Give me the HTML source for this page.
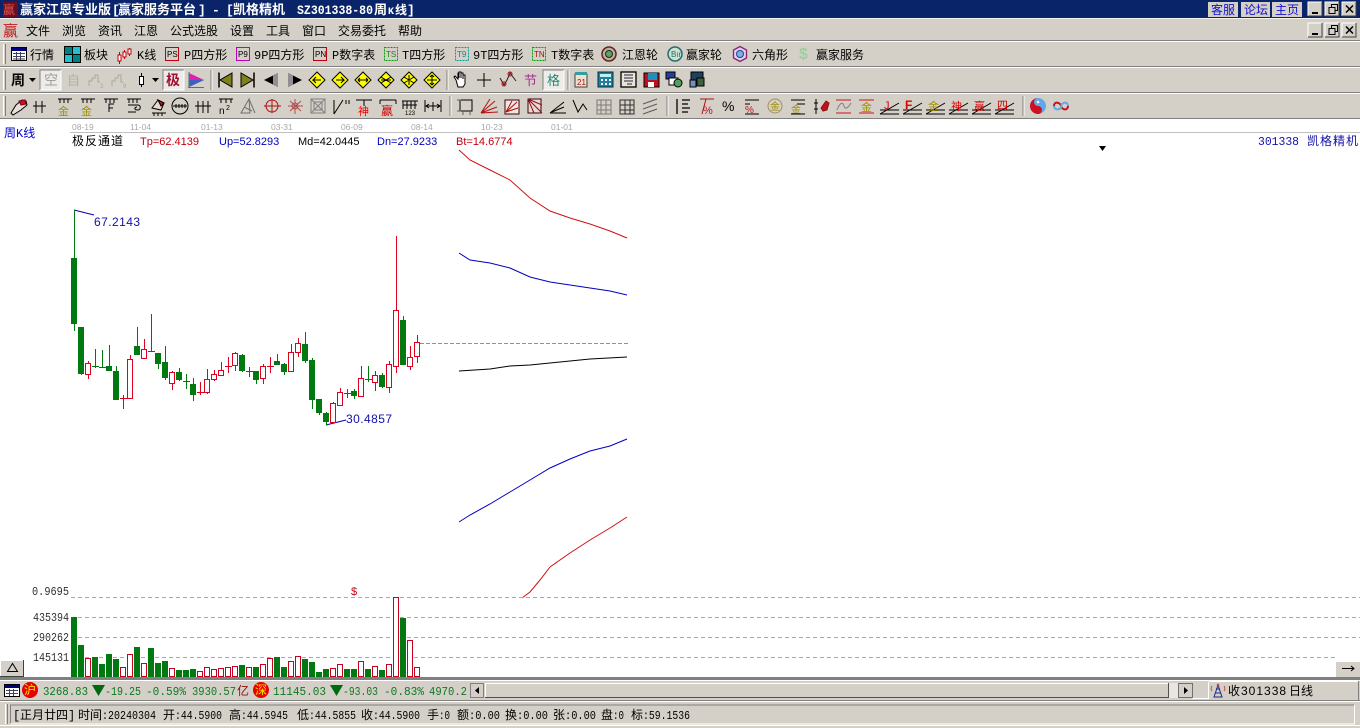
<!DOCTYPE html>
<html lang="zh"><head><meta charset="utf-8"><title>赢家江恩专业版</title>
<style>
html,body{margin:0;padding:0;background:#fff;width:1360px;height:728px;overflow:hidden}
svg{display:block;position:absolute;left:0;top:0}
text{font-family:"WenQuanYi Zen Hei","Liberation Mono","Noto Sans CJK SC",monospace;font-size:12px;fill:#000;white-space:pre}
.m{font-family:"Liberation Mono",monospace;font-size:11.5px}
.s{font-family:"Liberation Sans",sans-serif;font-size:11px}
.g{fill:#0a7a20}
.w{fill:#fff;font-weight:bold;font-size:13px}
.d{font-family:"Liberation Sans",sans-serif;font-size:8.5px;fill:#a8a8a8}
.b{fill:#0000c0}.r{fill:#c00010}
.i{font-family:"Liberation Sans",sans-serif;font-size:8px}
.l{stroke:#000;fill:none}
.n{font-family:"Liberation Sans",sans-serif;font-size:12px;letter-spacing:.45px;fill:#1010a8}
.k{fill:#303030}
</style></head><body>
<svg width="1360" height="728" viewBox="0 0 1360 728" xmlns="http://www.w3.org/2000/svg">
<defs>
<g id="dia"><path d="M0-8L8 0L0 8L-8 0Z" fill="#ffff00" stroke="#000"/></g>
<g id="btn"><rect width="14" height="14" fill="#d4d0c8"/><path d="M0 14V0H14" fill="none" stroke="#fff"/><path d="M14 0V14H0" fill="none" stroke="#404040"/></g>
<g id="ang"><path d="M-10 8H9M-10 4H9M-10 8L9-3" fill="none" stroke="#000"/></g>
</defs>

<!-- backgrounds -->
<rect width="1360" height="119" fill="#d4d0c8"/>
<rect width="1360" height="18" fill="#0a246a"/>
<rect y="18" width="1360" height="1" fill="#f4f4f0"/>
<g shape-rendering="crispEdges">
<rect y="40" width="1360" height="1" fill="#808080"/><rect y="41" width="1360" height="1" fill="#fff"/>
<rect y="66" width="1360" height="1" fill="#808080"/><rect y="67" width="1360" height="1" fill="#fff"/>
<rect y="92" width="1360" height="1" fill="#808080"/><rect y="93" width="1360" height="1" fill="#fff"/>
<rect y="118" width="1360" height="1" fill="#808080"/>
<path d="M3 44h1v20h-1zM3 70h1v20h-1zM3 96h1v20h-1z" fill="#fff"/>
<path d="M5 44h1v20h-1zM5 70h1v20h-1zM5 96h1v20h-1z" fill="#808080"/>
<path d="M211 70v20M447 70v20M568 70v20M450 96v20M667 96v20M1023 96v20" stroke="#808080"/>
<path d="M212 70v20M448 70v20M569 70v20M451 96v20M668 96v20M1024 96v20" stroke="#fff"/>
</g>

<!-- title -->
<rect x="3" y="2" width="15" height="15" fill="#6a1020"/>
<text x="3" y="14" style="fill:#e05050">赢</text>
<text x="20" y="14" class="w">赢家江恩专业版</text>
<text x="112" y="14" class="w">[</text><text x="118" y="14" class="w">赢家服务平台</text><text x="198" y="14" class="w">]</text><text x="212" y="14" class="w">-</text><text x="226" y="14" class="w">[</text><text x="233" y="14" class="w">凯格精机</text>
<text x="297" y="14" class="w m" textLength="76" lengthAdjust="spacingAndGlyphs">SZ301338-80</text><text x="374" y="14" class="w">周</text><text x="388" y="14" class="w" style="font-size:10px">K</text><text x="395" y="14" class="w" style="font-size:12px">线</text><text x="407" y="14" class="w">]</text>
<g shape-rendering="crispEdges">
<rect x="1208" y="2" width="30" height="15" fill="#d4d0c8"/><rect x="1241" y="2" width="29" height="15" fill="#d4d0c8"/><rect x="1272" y="2" width="30" height="15" fill="#d4d0c8"/>
</g>
<text x="1211" y="14" style="fill:#1010d0">客服</text><text x="1244" y="14" style="fill:#1010d0">论坛</text><text x="1275" y="14" style="fill:#1010d0">主页</text>
<g shape-rendering="crispEdges">
<use href="#btn" x="1308" y="2"/><use href="#btn" x="1325" y="2"/><use href="#btn" x="1342" y="2"/>
<use href="#btn" x="1308" y="23"/><use href="#btn" x="1325" y="23"/><use href="#btn" x="1342" y="23"/>
<path d="M1312 12h6v2h-6zM1312 33h6v2h-6z" fill="#000"/>
<path d="M1329 7.500h6v6h-6zM1331.500 7v-2.500h6v6h-2M1329 28.500h6v6h-6zM1331.500 28v-2.500h6v6h-2" fill="none" stroke="#000"/>
</g>
<path d="M1346 5.500l7 7M1353 5.500l-7 7M1346 26.500l7 7M1353 26.500l-7 7" stroke="#000" stroke-width="1.500"/>

<!-- menu -->
<text x="3" y="36" style="font-size:15px;fill:#c01818">赢</text>
<text x="26" y="35">文件</text><text x="62" y="35">浏览</text><text x="98" y="35">资讯</text><text x="134" y="35">江恩</text><text x="170" y="35">公式选股</text><text x="230" y="35">设置</text><text x="266" y="35">工具</text><text x="302" y="35">窗口</text><text x="338" y="35">交易委托</text><text x="398" y="35">帮助</text>

<!-- toolbar row 1 -->
<g shape-rendering="crispEdges">
<rect x="11.500" y="47.500" width="15" height="13" fill="#fff" stroke="#000"/><rect x="12" y="48" width="14" height="3" fill="#000080"/>
<path d="M13 53.500h12M13 56.500h12M13 59h12M16.500 52v8M20.500 52v8" stroke="#404060"/>
<path d="M65 47h7v7h-7z" fill="#008080"/><path d="M73 47h7v7h-7z" fill="#20c0d0"/><path d="M65 55h7v7h-7z" fill="#20c0d0"/><path d="M73 55h7v7h-7z" fill="#008080"/>
<path d="M64.500 46.500h16v16h-16z" fill="none" stroke="#000"/><path d="M72.500 46v17M64 54.500h17" stroke="#000"/>
</g>
<path d="M119.500 52v12M124.500 50v9M129.500 48v8" stroke="#c00010" fill="none"/>
<path d="M118 55h3v6h-3zM123 52h3v5h-3zM128 49h3v5h-3z" fill="#fff" stroke="#c00010"/>
<g shape-rendering="crispEdges" fill="none">
<rect x="165.500" y="47.500" width="13" height="13" stroke="#c00010"/>
<rect x="236.500" y="47.500" width="13" height="13" stroke="#c000c0"/>
<rect x="313.500" y="47.500" width="13" height="13" stroke="#c00010"/>
<rect x="384.500" y="47.500" width="13" height="13" stroke="#00a000" stroke-dasharray="2 1"/>
<rect x="455.500" y="47.500" width="13" height="13" stroke="#00a0a0" stroke-dasharray="2 1"/>
<rect x="532.500" y="47.500" width="13" height="13" stroke="#00a000" stroke-dasharray="2 1"/>
</g>
<text class="i" x="167" y="57">PS</text><text class="i" x="238" y="57">P9</text><text class="i" x="315" y="57">PN</text><text class="i" x="386" y="57" style="fill:#208020">TS</text><text class="i" x="457" y="57" style="fill:#208080">T9</text><text class="i" x="534" y="57" style="fill:#a01010">TN</text>
<circle cx="609" cy="54" r="7" fill="#b0b8a0" stroke="#6a2020" stroke-width="1.500"/><circle cx="609" cy="54" r="3.500" fill="#60a060" stroke="#302020"/>
<circle cx="675" cy="54" r="7" fill="#d0e0d0" stroke="#207070" stroke-width="1.500"/><text class="i" x="671" y="57" style="fill:#207070">Bın</text>
<path d="M740 46.500l6.500 3.500v8l-6.500 3.500l-6.500-3.500v-8z" fill="#e0d0e8" stroke="#8a2070" stroke-width="1.300"/><circle cx="740" cy="54" r="3.500" fill="#80b0e0" stroke="#2040a0"/>
<text x="799" y="59" style="font-family:'Liberation Sans';font-size:16px;font-weight:bold;fill:#9ccf9c">$</text>
<text x="30" y="59">行情</text><text x="84" y="59">板块</text><text x="137" y="59">K线</text><text x="184" y="59">P四方形</text><text x="254" y="59">9P四方形</text><text x="332" y="59">P数字表</text><text x="402" y="59">T四方形</text><text x="473" y="59">9T四方形</text><text x="551" y="59">T数字表</text><text x="622" y="59">江恩轮</text><text x="686" y="59">赢家轮</text><text x="752" y="59">六角形</text><text x="816" y="59">赢家服务</text>

<!-- toolbar row 2 -->
<text x="11" y="85" style="font-weight:bold;font-size:14px">周</text>
<path d="M29 78h7l-3.500 4z" fill="#000"/>
<rect x="40" y="70" width="21" height="20" fill="#eeece8"/><path d="M40 90V70H61" fill="none" stroke="#808080"/><path d="M61 70V90H40" fill="none" stroke="#fff"/>
<text x="44" y="85" style="font-size:14px;fill:#a0a0a0">空</text>
<text x="67" y="85" style="font-size:13px;fill:#b0b0a8">自</text>
<path d="M89 86v-5h3v-3h3v-3h3v7h2M112 86v-5h3v-3h3v-3h3v7h2" fill="none" stroke="#a8a8a0"/>
<text class="i" x="100" y="88" style="fill:#a8a8a0;font-size:6px">3</text><text class="i" x="123" y="88" style="fill:#a8a8a0;font-size:6px">9</text>
<path d="M141.500 73v14" stroke="#000"/><rect x="139.500" y="76.500" width="4" height="8" fill="#fff" stroke="#000"/>
<path d="M152 78h7l-3.500 4z" fill="#000"/>
<rect x="163" y="70" width="21" height="20" fill="#eeece8"/><path d="M163 90V70H184" fill="none" stroke="#808080"/><path d="M184 70V90H163" fill="none" stroke="#fff"/>
<text x="166" y="85" style="font-size:14px;fill:#a01030;font-weight:bold">极</text>
<path d="M189 73l15 7l-15 7z" fill="#e020b0"/><path d="M189 80l15 0l-15 7z" fill="#4060c0"/><path d="M189 72v16M188 87.500h16" stroke="#408060" fill="none"/>
<path d="M219 72.500v15" stroke="#000" stroke-width="1.500"/><path d="M232 73v14l-12-7z" fill="#80801c" stroke="#000"/>
<path d="M254 72.500v15" stroke="#000" stroke-width="1.500"/><path d="M241 73v14l12-7z" fill="#80801c" stroke="#000"/>
<path d="M264 80l14-7v14z" fill="#000"/><path d="M273 75.500l5-2.500v14l-5-2.500z" fill="#909090"/>
<path d="M302 80l-14-7v14z" fill="#000"/><path d="M293 75.500l-5-2.500v14l5-2.500z" fill="#909090"/>
<use href="#dia" x="317" y="80"/><use href="#dia" x="340" y="80"/><use href="#dia" x="363" y="80"/><use href="#dia" x="386" y="80"/><use href="#dia" x="409" y="80"/><use href="#dia" x="432" y="80"/>
<path d="M321 80h-8l3-3M313 80l3 3M336 80h8l-3-3M344 80l-3 3M358 80h10M358 80l2-2M358 80l2 2M368 80l-2-2M368 80l-2 2M381 77l10 6M391 77l-10 6M381 80h10M409 75v10M404 77l10 6M414 77l-10 6M427 80h10M432 75v10M432 75l-2 2M432 75l2 2M432 85l-2-2M432 85l2-2" stroke="#000" fill="none"/>
<path d="M456 80l-2-3l1-1l3 3v-6h1v5v-6h2v6v-5h2v6v-4h2v9l-2 3h-5z" fill="#fff" stroke="#000"/>
<path d="M484 73v14M477 80h14" stroke="#000"/>
<path d="M500 78l4 7l3-5l3-7l6 8" fill="none" stroke="#202020"/><circle cx="504" cy="84" r="2" fill="none" stroke="#c00010"/><circle cx="510" cy="74" r="2" fill="none" stroke="#c00010"/>
<text x="524" y="85" style="font-size:13px;fill:#a03090">节</text>
<rect x="543" y="70" width="21" height="20" fill="#eeece8"/><path d="M543 90V70H564" fill="none" stroke="#808080"/><path d="M564 70V90H543" fill="none" stroke="#fff"/>
<text x="547" y="85" style="font-size:13px;fill:#208878">格</text>
<rect x="575" y="74" width="12" height="13" fill="#f0e0d0" stroke="#404040"/><rect x="575" y="72" width="12" height="3" fill="#30a0a0"/><text class="i" x="577" y="85" style="fill:#a01010">21</text>
<rect x="598" y="72" width="15" height="15" fill="#2080a0" stroke="#003040"/><rect x="600" y="74" width="11" height="3" fill="#c0f0f0"/><path d="M601 79h2v2h-2zM605 79h2v2h-2zM609 79h2v2h-2zM601 83h2v2h-2zM605 83h2v2h-2zM609 83h2v2h-2z" fill="#fff"/>
<rect x="621" y="72" width="15" height="15" fill="#e8e4d8" stroke="#000" stroke-width="1.300"/><path d="M624 75h9M624 78h9M624 81h9M627 84h5" stroke="#202040"/>
<rect x="644" y="73" width="15" height="14" fill="#c01020" stroke="#000"/><rect x="648" y="73" width="9" height="7" fill="#2090c0"/><rect x="648" y="82" width="6" height="5" fill="#fff"/>
<rect x="666" y="72" width="9" height="7" fill="#2040a0" stroke="#000"/><rect x="669" y="78" width="9" height="7" fill="#fff" stroke="#000"/><circle cx="678" cy="83" r="4" fill="#50a060" stroke="#000"/>
<rect x="691" y="72" width="12" height="8" fill="#204060" stroke="#000"/><rect x="690" y="80" width="6" height="7" fill="#7090c0" stroke="#000"/><rect x="697" y="78" width="7" height="8" fill="#406040" stroke="#000"/>

<!-- toolbar row 3 -->
<g fill="none" stroke="#000">
<path d="M11 113l5-8l6-5l4 1l1 4l-6 5l-8 5z" fill="#e8e0d8"/><path d="M19 101l6-1l1 4l-5 1z" fill="#d01020" stroke="#800010"/>
<path d="M36 101v12M42 101v12M33 106h13"/>
<path d="M58 99h14M60 99v4M64 99v4M68 99v4"/>
<path d="M81 99h14M83 99v4M87 99v4M91 99v4"/>
<path d="M104 99h14M106 99v4M110 99v4M114 99v4"/><path d="M109 112v-8h5M109 108h4"/>
<path d="M127 99h14M129 99v4M133 99v4M137 99v4M128 105h10c3 0 3 5 0 5c-4 0-4-3-1-3M128 112h8"/>
<path d="M152 113h14M154 113v3M158 113v3M162 113v3M152 108l6-8l6 3l-3 7z" fill="#e8d8d0"/><path d="M158 100l6 3l-3 3z" fill="#d01020"/>
<circle cx="180" cy="106" r="8"/><path d="M173 106h14M176 104v4M179 104v4M182 104v4M185 104v4"/>
<path d="M198 101v12M203 101v12M208 101v12M195 106h16"/>
<path d="M219 99h14M221 99v4M226 99v4M231 99v4"/>
<path d="M241 113l8-14l1 14zM244 107l8 4M249 99l6 14" stroke="#707070"/>
<g stroke="#b01010"><circle cx="272" cy="106" r="6"/><path d="M264 106h17M272 99v14"/></g>
<g stroke="#b05050"><path d="M288 106h15M295 99v15M290 101l11 10M301 101l-11 10"/><circle cx="295" cy="106" r="3"/></g>
<g stroke="#808080"><rect x="311" y="99" width="14" height="14"/><rect x="314" y="102" width="8" height="8"/><path d="M311 99l14 14M325 99l-14 14"/></g>
<path d="M334 114v-14M343 100l-9 14M346 100v4M349 100v4"/>
<path d="M356 100h16M364 100v6" stroke="#000"/>
<path d="M380 100h16M380 100v4M396 100v4"/>
<path d="M402 101h16M403 101v8M407 101v8M411 101v8M415 101v8M403 105h14"/>
<path d="M425 100v12M441 100v12M426 106h14M429 104l-3 2l3 2M437 104l3 2l-3 2M433 102v9"/>
</g>
<text x="358" y="115" style="font-size:11px;fill:#f00000">神</text><text x="381" y="115" style="font-size:12px;fill:#d00000">赢</text>
<text x="58" y="115" style="font-size:11px;fill:#a09000">金</text><text x="81" y="115" style="font-size:11px;fill:#a09000">金</text>
<text class="i" x="219" y="114" style="font-size:10px">n</text><text class="i" x="226" y="110" style="font-size:7px">2</text>
<text class="i" x="405" y="115" style="font-size:6px">123</text>
<g fill="none" stroke="#606060">
<rect x="460" y="100" width="12" height="11" stroke="#000"/><path d="M457 100h4M457 111h4M463 111v4M470 111v4" />
</g>
<g fill="none" stroke="#b01010"><path d="M481 113l14-12M481 113l16-6M481 113l9-14M481 113l17-1"/></g>
<rect x="505" y="100" width="14" height="14" fill="#f0e8e0" stroke="#400010"/><path d="M506 112l11-10M506 112l6-11M506 112l12-4" stroke="#b01010" fill="none"/>
<rect x="528" y="99" width="13" height="14" fill="#e8d8d0" stroke="#400010"/><path d="M528 99l14 14M528 99l6 14M528 99l14 6" stroke="#901020" fill="none"/>
<path d="M550 113l14-11M550 113h16M552 112l12-5" fill="none" stroke="#000"/>
<path d="M573 100l5 12l5-8l4 6" fill="none" stroke="#000"/>
<g fill="none" stroke="#807878"><path d="M597 100h14v14h-14zM601 100v14M606 100v14M597 105h14M597 110h14"/></g>
<g fill="none" stroke="#303030"><path d="M620 100h14v14h-14zM625 100v14M630 100v14M620 105h14M620 110h14"/></g>
<g fill="none" stroke="#605858"><path d="M643 104l14-5M643 109l14-5M643 114l14-5"/></g>
<g fill="none" stroke="#000">
<path d="M677 99v15M682 100h8M682 104h6M682 108h8M682 112h6" stroke-width="1.300"/>
<path d="M700 99h14M702 114l4-15" stroke="#b01010"/>
<path d="M745 100h14M745 104h5M745 114h14" />
<circle cx="775" cy="106" r="7" stroke="#a09060"/>
<path d="M791 100h14M797 104h8M791 114h14"/>
<path d="M816 99v15M814 103h4M814 109h4"/><path d="M821 108l5-7l3 2l-2 7l-4 1z" fill="#c01020" stroke="#901010"/>
<path d="M836 100h15M836 113h15" stroke="#d01020"/><path d="M837 110c3-8 6-8 7-4s4 2 7-3" stroke="#808080"/>
<path d="M859 100h15M859 113h15" stroke="#d01020"/>
<use href="#ang" x="890" y="106"/><use href="#ang" x="913" y="106"/><use href="#ang" x="936" y="106"/><use href="#ang" x="959" y="106"/><use href="#ang" x="982" y="106"/><use href="#ang" x="1005" y="106"/>
</g>
<text x="722" y="111" style="font-family:'Liberation Sans';font-size:14px">%</text>
<text x="703" y="114" style="font-family:'Liberation Sans';font-size:11px;fill:#c01020">%</text>
<text x="745" y="113" style="font-family:'Liberation Sans';font-size:10px;fill:#c01020">%</text>
<text x="770" y="110" style="font-size:10px;fill:#a09000">金</text><text x="791" y="113" style="font-size:10px;fill:#a09000">金</text><text x="861" y="111" style="font-size:11px;fill:#a09000">金</text>
<text x="884" y="109" style="font-family:'Liberation Sans';font-size:11px;fill:#e00000">J</text><text x="905" y="109" style="font-family:'Liberation Sans';font-size:12px;font-weight:bold;fill:#e00000">F</text>
<text x="928" y="110" style="font-size:11px;fill:#a09000">金</text><text x="951" y="110" style="font-size:11px;fill:#e00000">神</text><text x="974" y="110" style="font-size:11px;fill:#d00000">赢</text><text x="997" y="109" style="font-size:11px;fill:#d00000">四</text>
<circle cx="1038" cy="106" r="8" fill="#60a8e8"/><path d="M1038 98a8 8 0 0 0 0 16a4 4 0 0 0 0-8a4 4 0 0 1 0-8z" fill="#d01020"/><circle cx="1038" cy="102" r="1.300" fill="#fff"/><circle cx="1038" cy="110" r="1.300" fill="#d01020"/>
<path d="M1054 106c0-5 6-4 7 0s7 5 7 0" fill="none" stroke="#c01020" stroke-width="2"/><path d="M1061 106c1 4-7 5-7 0M1061 106c1-4 7-5 7 0" fill="none" stroke="#60a8e0" stroke-width="2"/>

<!-- chart header -->
<rect x="70" y="132" width="1290" height="1" fill="#c0c0c0" shape-rendering="crispEdges"/>
<text class="d" x="72" y="130">08-19</text><text class="d" x="130" y="130">11-04</text><text class="d" x="201" y="130">01-13</text><text class="d" x="271" y="130">03-31</text><text class="d" x="341" y="130">06-09</text><text class="d" x="411" y="130">08-14</text><text class="d" x="481" y="130">10-23</text><text class="d" x="551" y="130">01-01</text>
<text x="4" y="137" style="fill:#0000d0">周K线</text>
<text x="72" y="145" style="letter-spacing:1px">极反通道</text>
<text class="s r" x="140" y="145">Tp=62.4139</text><text class="s b" x="219" y="145">Up=52.8293</text><text class="s" x="298" y="145">Md=42.0445</text><text class="s b" x="377" y="145">Dn=27.9233</text><text class="s r" x="456" y="145">Bt=14.6774</text>
<text x="1258" y="145" class="m" style="fill:#1010a8" textLength="41" lengthAdjust="spacingAndGlyphs">301338</text><text x="1307" y="145" style="fill:#1010a8;letter-spacing:1px">凯格精机</text>
<path d="M1099 146h7l-3.500 5z" fill="#000"/>

<!-- overlay curves -->
<g fill="none" stroke-width="1">
<path d="M459 150L470 160L490 170L510 180L530 198L550 211L570 218L590 224L610 231L627 238" stroke="#d01010"/>
<path d="M459 253L470 260L490 263L510 268L530 277L550 282L570 285L590 288L610 291L627 295" stroke="#0000c0"/>
<path d="M459 371L490 369L510 366L530 365L560 362L590 359L627 357" stroke="#000"/>
<path d="M459 522L470 515L490 504L510 492L530 480L550 468L570 459L590 451L610 446L627 439" stroke="#0000c0"/>
<path d="M522 598L530 592L540 580L550 567L570 553L590 540L610 528L627 517" stroke="#d01010"/>
</g>
<path d="M420 343.500H630" stroke="#909090" stroke-dasharray="4 2" shape-rendering="crispEdges"/>

<!-- candles -->
<path d="M74 210L94 215M326 425L346 420" stroke="#0000c0" fill="none"/>
<text class="n" x="94" y="226">67.2143</text><text class="n" x="346" y="423">30.4857</text>
<g shape-rendering="crispEdges">
<path stroke="#007a10" fill="none" d="M74.500 210V331M81.500 327V375M95.500 349V368M102.500 350V368M109.500 345V371M116.500 366V400M137.500 327V355M151.500 314V352M158.500 353V369M165.500 346V380M179.500 368V381M186.500 374V389M193.500 378V401M242.500 354V372M256.500 371V384M277.500 354V365M284.500 363V375M305.500 332V363M312.500 358V409M319.500 399V415M326.500 412V425M347.500 389V398M354.500 389V399M368.500 366V382M382.500 373V388M403.500 316V365"/>
<path fill="#007a10" d="M71 258h6v66h-6zM78 327h6v47h-6zM92 366h7v1h-7zM99 367h7v1h-7zM106 366h6v5h-6zM113 371h6v29h-6zM134 346h6v9h-6zM148 351h7v1h-7zM155 353h6v11h-6zM162 362h6v16h-6zM176 372h6v8h-6zM183 381h7v1h-7zM190 384h6v11h-6zM239 355h6v16h-6zM253 371h6v9h-6zM274 361h6v4h-6zM281 364h6v8h-6zM302 344h6v17h-6zM309 360h6v40h-6zM316 399h6v14h-6zM323 413h6v9h-6zM344 393h7v1h-7zM351 391h6v5h-6zM365 379h7v1h-7zM379 375h6v12h-6zM400 320h6v45h-6z"/>
<path stroke="#e00020" fill="none" d="M88.500 361V379M123.500 395V409M130.500 355V399M144.500 339V359M172.500 371V390M200.500 382V395M207.500 369V394M214.500 370V381M221.500 362V376M228.500 357V373M235.500 352V371M249.500 367V377M263.500 364V384M270.500 357V373M291.500 344V372M298.500 338V357M333.500 402V423M340.500 388V405M361.500 366V396M375.500 371V391M389.500 361V393M396.500 236V373M410.500 346V370M417.500 335V363M120 398.500h7M197 392.500h7M225 366.500h7M246 371.500h7M267 366.500h7"/>
<path stroke="#e00020" fill="#fff" d="M85.500 363.500h5v11h-5zM127.500 359.500h5v39h-5zM141.500 349.500h5v9h-5zM169.500 372.500h5v11h-5zM204.500 379.500h5v13h-5zM211.500 374.500h5v5h-5zM218.500 370.500h5v5h-5zM232.500 353.500h5v12h-5zM260.500 366.500h5v12h-5zM288.500 352.500h5v19h-5zM295.500 343.500h5v9h-5zM330.500 403.500h5v19h-5zM337.500 392.500h5v13h-5zM358.500 378.500h5v18h-5zM372.500 375.500h5v7h-5zM386.500 364.500h5v23h-5zM393.500 310.500h5v56h-5zM407.500 357.500h5v9h-5zM414.500 342.500h5v14h-5z"/>

<path d="M71 597.500H1360M71 617.500H1360M71 637.500H1360M71 657.500H1335" stroke="#a8a8a8" stroke-dasharray="4 3" fill="none"/>
<path fill="#007a10" d="M71 617h6v60h-6zM78 645h6v32h-6zM92 657h6v20h-6zM99 664h6v13h-6zM106 654h6v23h-6zM113 659h6v18h-6zM134 647h6v30h-6zM148 648h6v29h-6zM155 663h6v14h-6zM162 661h6v16h-6zM176 670h6v7h-6zM183 670h6v7h-6zM190 669h6v8h-6zM239 665h6v12h-6zM253 667h6v10h-6zM274 657h6v20h-6zM281 667h6v10h-6zM302 659h6v18h-6zM309 662h6v15h-6zM316 672h6v5h-6zM323 669h6v8h-6zM344 669h6v8h-6zM351 669h6v8h-6zM365 669h6v8h-6zM379 670h6v7h-6zM400 618h6v59h-6z"/>
<path stroke="#c80020" fill="#fff" d="M85.500 658.500h5v18h-5zM120.500 667.500h5v9h-5zM127.500 654.500h5v22h-5zM141.500 663.500h5v13h-5zM169.500 668.500h5v8h-5zM197.500 671.500h5v5h-5zM204.500 667.500h5v9h-5zM211.500 669.500h5v7h-5zM218.500 668.500h5v8h-5zM225.500 667.500h5v9h-5zM232.500 666.500h5v10h-5zM246.500 667.500h5v9h-5zM260.500 664.500h5v12h-5zM267.500 658.500h5v18h-5zM288.500 661.500h5v15h-5zM295.500 656.500h5v20h-5zM330.500 668.500h5v8h-5zM337.500 664.500h5v12h-5zM358.500 661.500h5v15h-5zM372.500 666.500h5v10h-5zM386.500 664.500h5v12h-5zM393.500 597.500h5v79h-5zM407.500 640.500h5v36h-5zM414.500 667.500h5v9h-5z"/>
</g>
<text x="32" y="595" class="m k" textLength="37" lengthAdjust="spacingAndGlyphs">0.9695</text><text x="33" y="621" class="m k" textLength="36" lengthAdjust="spacingAndGlyphs">435394</text><text x="33" y="641" class="m k" textLength="36" lengthAdjust="spacingAndGlyphs">290262</text><text x="33" y="661" class="m k" textLength="36" lengthAdjust="spacingAndGlyphs">145131</text>
<text x="351" y="595" style="fill:#c00010;font-family:'Liberation Sans';font-size:11px">$</text>

<!-- corner buttons -->
<g shape-rendering="crispEdges">
<rect x="0" y="660" width="24" height="17" fill="#d4d0c8"/><path d="M0 660.500H24M.5 660v17" stroke="#fff"/><path d="M23.500 660v17M0 676.500H24" stroke="#404040"/>
<rect x="1335" y="661" width="25" height="16" fill="#d4d0c8"/><path d="M1335 661.500H1360M1335.500 661v16" stroke="#fff"/>
</g>
<path d="M12.500 663.500l-5 8h10z" fill="none" stroke="#000"/>
<path d="M1342 668.500h12M1351 666l3 2.500l-3 2.500" stroke="#000" fill="none"/>

<!-- status -->
<rect y="677" width="1360" height="51" fill="#d4d0c8"/>
<g shape-rendering="crispEdges">
<rect y="677" width="1360" height="3" fill="#808080"/>
<rect y="680" width="1360" height="1" fill="#fff"/>
<rect y="700" width="1360" height="1" fill="#808080"/><rect y="701" width="1360" height="1" fill="#fff"/>
<rect y="725" width="1360" height="1" fill="#fff"/>
<path d="M10.500 724V705H1354" stroke="#808080" fill="none"/><path d="M1354.500 705V724H10" stroke="#fff" fill="none"/>
<path d="M5 704h1v20h-1z" fill="#fff"/><path d="M7 704h1v20h-1z" fill="#808080"/>
<rect x="4.500" y="684.500" width="15" height="12" fill="#fff" stroke="#000"/><rect x="5" y="685" width="14" height="3" fill="#000080"/>
<path d="M6 690.500h12M6 693.500h12M9.500 689v7M13.500 689v7" stroke="#404060"/>
</g>
<circle cx="30" cy="690" r="8" fill="#e80000"/><text x="24" y="694" style="fill:#ffe000">沪</text>
<text class="g m" x="43" y="695" textLength="45" lengthAdjust="spacingAndGlyphs">3268.83</text>
<path d="M92 685h13l-6.500 11z" fill="#006a10"/>
<text class="g m" x="105" y="695" textLength="36" lengthAdjust="spacingAndGlyphs">-19.25</text><text class="g m" x="146" y="695" textLength="40" lengthAdjust="spacingAndGlyphs">-0.59%</text><text class="g m" x="192" y="695" textLength="44" lengthAdjust="spacingAndGlyphs">3930.57</text><text x="237" y="695" style="fill:#901010">亿</text>
<circle cx="261" cy="690" r="8" fill="#e80000"/><text x="255" y="694" style="fill:#ffe000">深</text>
<text class="g m" x="273" y="695" textLength="53" lengthAdjust="spacingAndGlyphs">11145.03</text>
<path d="M330 685h13l-6.500 11z" fill="#006a10"/>
<text class="g m" x="343" y="695" textLength="35" lengthAdjust="spacingAndGlyphs">-93.03</text><text class="g m" x="384" y="695" textLength="40" lengthAdjust="spacingAndGlyphs">-0.83%</text><text class="g m" x="429" y="695" textLength="38" lengthAdjust="spacingAndGlyphs">4970.2</text>
<!-- scrollbar -->
<g shape-rendering="crispEdges">
<rect x="469" y="682" width="739" height="17" fill="#d4d0c8"/>
<rect x="470.500" y="683.500" width="13" height="14" fill="#d4d0c8" stroke="#808080"/>
<rect x="485" y="683" width="684" height="15" fill="#d4d0c8"/><path d="M485.500 698V683.500H1168" stroke="#fff" fill="none"/><path d="M1168.500 683V697.500H485" stroke="#505050" fill="none"/>
<rect x="1169" y="683" width="9" height="15" fill="#e8e6e0"/>
<rect x="1178.500" y="683.500" width="14" height="14" fill="#d4d0c8" stroke="#707070"/>
<rect x="1192" y="698" width="16" height="1" fill="#fff"/><rect x="1208" y="682" width="1" height="17" fill="#fff"/>
<rect x="1209" y="681" width="149" height="1" fill="#fff"/><rect x="1358" y="681" width="1" height="19" fill="#808080"/>
</g>
<path d="M479 687v7l-4-3.500z" fill="#000"/><path d="M1184 687v7l4-3.500z" fill="#000"/>
<path d="M1218 685l-4 12h8zM1215 693h6M1216 689h4" fill="none" stroke="#1a2a8a"/><path d="M1212 686a4 4 0 0 0 0 5M1224 686a4 4 0 0 1 0 5" stroke="#d04040" fill="none"/><circle cx="1218" cy="685" r="1.300" fill="#d04040"/>
<text x="1228" y="695">收</text>
<text x="1241" y="695" style="letter-spacing:1px;font-family:'Liberation Sans',sans-serif;font-size:12px">301338</text>
<text x="1289" y="695">日线</text>

<text x="13" y="719">[</text><text x="20" y="719">正月廿四</text><text x="68" y="719">]</text>
<text x="78" y="719">时间</text><text x="102" y="719" class="m" textLength="54" lengthAdjust="spacingAndGlyphs">:20240304</text>
<text x="163" y="719">开</text><text x="175" y="719" class="m" textLength="47" lengthAdjust="spacingAndGlyphs">:44.5900</text>
<text x="229" y="719">高</text><text x="241" y="719" class="m" textLength="47" lengthAdjust="spacingAndGlyphs">:44.5945</text>
<text x="297" y="719">低</text><text x="309" y="719" class="m" textLength="47" lengthAdjust="spacingAndGlyphs">:44.5855</text>
<text x="361" y="719">收</text><text x="373" y="719" class="m" textLength="47" lengthAdjust="spacingAndGlyphs">:44.5900</text>
<text x="427" y="719">手</text><text x="439" y="719" class="m" textLength="11" lengthAdjust="spacingAndGlyphs">:0</text>
<text x="457" y="719">额</text><text x="469" y="719" class="m" textLength="31" lengthAdjust="spacingAndGlyphs">:0.00</text>
<text x="505" y="719">换</text><text x="517" y="719" class="m" textLength="31" lengthAdjust="spacingAndGlyphs">:0.00</text>
<text x="553" y="719">张</text><text x="565" y="719" class="m" textLength="31" lengthAdjust="spacingAndGlyphs">:0.00</text>
<text x="601" y="719">盘</text><text x="613" y="719" class="m" textLength="11" lengthAdjust="spacingAndGlyphs">:0</text>
<text x="631" y="719">标</text><text x="643" y="719" class="m" textLength="47" lengthAdjust="spacingAndGlyphs">:59.1536</text>
</svg>
</body></html>
